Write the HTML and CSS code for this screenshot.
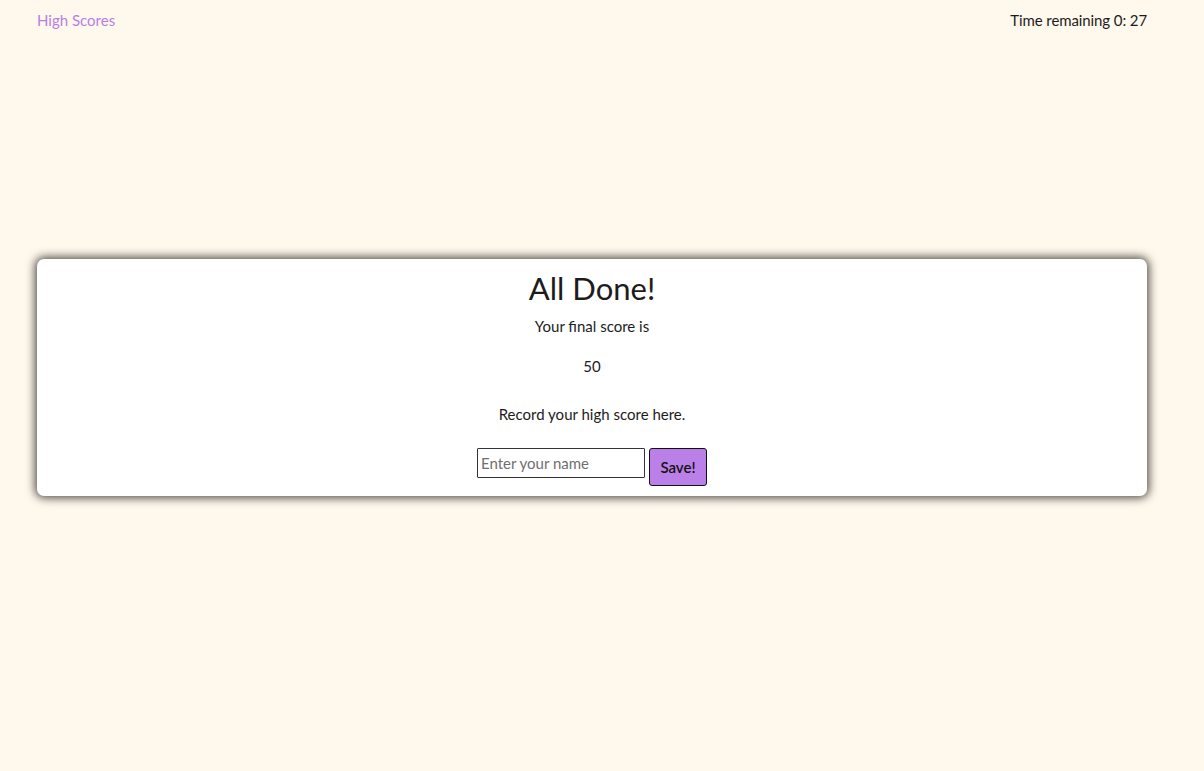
FILE: index.html
```html
<!DOCTYPE html>
<html lang="en">
<head>
<meta charset="utf-8">
<title>Quiz</title>
<link rel="stylesheet" href="styles.css">
</head>
<body>
<header class="topbar">
  <a class="hs-link" href="#">High Scores</a>
  <span class="timer">Time remaining 0: 27</span>
</header>
<main class="stage">
  <section class="card">
    <h1 class="title">All Done!</h1>
    <p class="line first">Your final score is</p>
    <p class="line score">50</p>
    <p class="line record">Record your high score here.</p>
    <form class="save-form">
      <input class="name-input" type="text" placeholder="Enter your name">
      <button class="save-btn" type="button">Save!</button>
    </form>
  </section>
</main>
</body>
</html>
```
FILE: styles.css
```css
* { box-sizing: border-box; }
html, body { height: 100%; }
body {
  margin: 0;
  background: #fff8ec;
  color: #1c1c1c;
  font-family: "Gill Sans", "Lato", "Open Sans", sans-serif;
  font-size: 15px;
}
.topbar {
  display: flex;
  justify-content: space-between;
  align-items: center;
  padding: 10px 57px 0 37px;
  height: 30px;
}
.hs-link {
  color: #b77fe6;
  text-decoration: none;
  font-size: 15px;
}
.timer { font-size: 15px; letter-spacing: -0.1px; }
.stage {
  padding: 229px 57px 0 37px;
}
.card {
  background: #fff;
  border-radius: 7px;
  box-shadow: 0 0 10px 2px rgba(0,0,0,0.7);
  height: 237px;
  text-align: center;
  padding-top: 10px;
}
.title {
  margin: 0;
  font-size: 31px;
  font-weight: 400;
  line-height: 38px;
}
.line {
  margin: 0;
  font-size: 15px;
  line-height: 20px;
}
.first { margin-top: 9px; }
.score { margin-top: 20px; }
.record { margin-top: 28px; }
.save-form {
  display: flex;
  justify-content: center;
  align-items: flex-start;
  gap: 4px;
  margin-top: 24px;
}
.name-input {
  width: 168px;
  height: 30px;
  border: 1px solid #333;
  border-radius: 1px;
  padding: 0 3px;
  font-family: inherit;
  font-size: 15px;
  color: #1c1c1c;
  background: #fff;
}
.name-input::placeholder { color: #6f6f6f; }
.save-btn {
  width: 58px;
  height: 38px;
  background: #bb80e8;
  border: 1px solid #111;
  border-radius: 3px;
  font-family: inherit;
  font-size: 15px;
  font-weight: 600;
  color: #111;
  padding: 0;
}
```
